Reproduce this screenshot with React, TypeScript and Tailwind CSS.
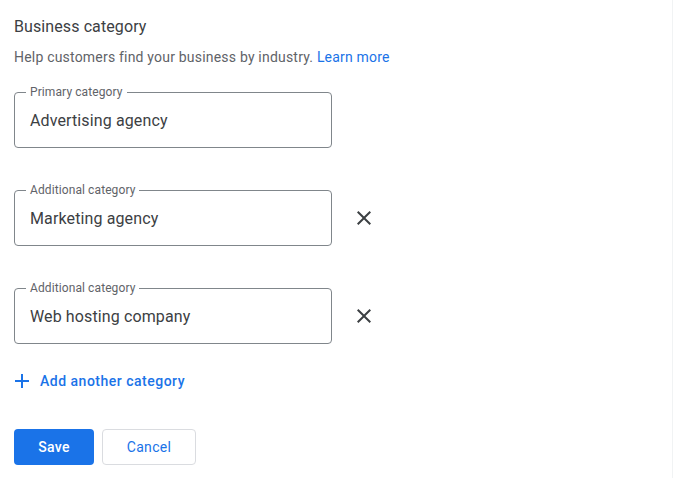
import { type ReactNode } from "react";

type Field = { label: string; value: string; removable: boolean };

const fields: Field[] = [
  { label: "Primary category", value: "Advertising agency", removable: false },
  { label: "Additional category", value: "Marketing agency", removable: true },
  { label: "Additional category", value: "Web hosting company", removable: true },
];

function Icon({ d }: { d: string }): ReactNode {
  return (
    <svg viewBox="0 0 24 24" width="24" height="24" fill="currentColor" aria-hidden="true">
      <path d={d} />
    </svg>
  );
}

const CLOSE =
  "M19 6.41L17.59 5 12 10.59 6.41 5 5 6.41 10.59 12 5 17.59 6.41 19 12 13.41 17.59 19 19 17.59 13.41 12z";
const ADD = "M19 13h-6v6h-2v-6H5v-2h6V5h2v6h6v2z";

function CategoryField({ field }: { field: Field }) {
  return (
    <div className="flex items-center gap-5">
      <div className="relative flex h-[56px] w-[318px] items-center rounded-[4px] border border-[#80868b] pl-[15px] pt-[2px]">
        <span className="absolute -top-[9px] left-[11px] bg-white px-1 text-[12px] leading-[16px] tracking-[0.1px] text-[#5f6368]">
          {field.label}
        </span>
        <span className="text-[16px] leading-[24px] tracking-[0.12px] text-[#3c4043]">{field.value}</span>
      </div>
      {field.removable && (
        <button type="button" className="flex h-6 w-6 items-center justify-center text-[#3c4043]">
          <Icon d={CLOSE} />
        </button>
      )}
    </div>
  );
}

export default function App() {
  return (
    <div
      className="min-h-[478px] w-[673px] border-r border-[#f1f3f4] bg-white px-[14px] pt-[15px]"
      style={{ fontFamily: "Roboto, 'Liberation Sans', sans-serif" }}
    >
      <h2 className="text-[16px] leading-[24px] tracking-[0.1px] text-[#3c4043]">Business category</h2>
      <p className="mt-2 text-[14px] leading-[20px] tracking-[0.2px] text-[#5f6368]">
        Help customers find your business by industry.{" "}
        <a className="text-[#1a73e8]">Learn more</a>
      </p>

      <div className="mt-[25px] flex flex-col gap-[42px]">
        {fields.map((field, i) => (
          <CategoryField key={i} field={field} />
        ))}
      </div>

      <button
        type="button"
        className="mt-[19px] -ml-[4px] flex h-9 items-center gap-[6px] text-[14px] font-medium text-[#1a73e8]"
      >
        <Icon d={ADD} />
        <span className="tracking-[0.5px]">Add another category</span>
      </button>

      <div className="mt-[30px] flex gap-2">
        <button
          type="button"
          className="h-9 w-20 rounded-[4px] bg-[#1a73e8] text-[14px] font-medium tracking-[0.25px] text-white"
        >
          Save
        </button>
        <button
          type="button"
          className="h-9 w-[94px] rounded-[4px] border border-[#dadce0] bg-white text-[14px] tracking-[0.3px] text-[#1a73e8]"
        >
          Cancel
        </button>
      </div>
    </div>
  );
}
